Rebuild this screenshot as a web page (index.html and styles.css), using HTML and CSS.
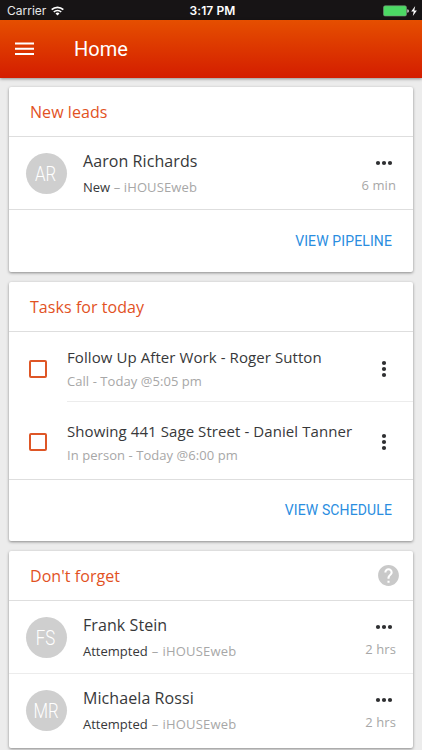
FILE: index.html
```html
<!DOCTYPE html>
<html lang="en">
<head>
<meta charset="utf-8">
<title>Home</title>
<link rel="stylesheet" href="styles.css">
</head>
<body>
<svg class="defs" width="0" height="0" aria-hidden="true">
  <symbol id="dots-h" viewBox="0 0 18 6"><circle cx="3" cy="3" r="2.1"/><circle cx="9" cy="3" r="2.1"/><circle cx="15" cy="3" r="2.1"/></symbol>
  <symbol id="dots-v" viewBox="0 0 6 18"><circle cx="3" cy="3" r="2.1"/><circle cx="3" cy="9" r="2.1"/><circle cx="3" cy="15" r="2.1"/></symbol>
</svg>
<div class="status">
  <div class="carrier"><span>Carrier</span>
    <svg class="wifi" width="13" height="10" viewBox="0 0 13 10" fill="none" stroke="#fff" stroke-width="1.7"><path d="M.7 3.7a8.3 8.3 0 0 1 11.6 0M2.8 6a5.3 5.3 0 0 1 7.4 0"/><path d="M6.5 9.6 4.5 7.5a2.9 2.9 0 0 1 4 0z" fill="#fff" stroke="none"/></svg>
  </div>
  <div class="time">3:17 PM</div>
  <div class="power">
    <svg width="35" height="12" viewBox="0 0 35 12"><rect x=".5" y=".8" width="23" height="10.2" rx="1.6" fill="#4cd964" stroke="#79917b" stroke-width=".6"/><path d="M24.3 4.2q1.6.3 1.6 1.8t-1.6 1.8z" fill="#ddd"/><path d="M32.2 1 28.2 6.6h2.5L29.8 11l4.1-5.6h-2.6z" fill="#fff"/></svg>
  </div>
</div>
<header class="appbar">
  <svg width="19" height="14" viewBox="0 0 19 14" fill="#fff"><path d="M0 .5h19v2.1H0zM0 5.7h19v2.1H0zM0 10.9h19V13H0z"/></svg>
  <h1>Home</h1>
</header>
<main>
  <section class="card">
    <div class="head"><h2>New leads</h2></div>
    <div class="row lead">
      <div class="avatar"><span>AR</span></div>
      <div class="info"><div class="name">Aaron Richards</div><div class="sub"><b>New</b> – iHOUSEweb</div></div>
      <div class="side"><svg class="dh"><use href="#dots-h"/></svg><span>6 min</span></div>
    </div>
    <div class="foot"><a>VIEW PIPELINE</a></div>
  </section>
  <section class="card">
    <div class="head"><h2>Tasks for today</h2></div>
    <div class="tasks">
      <div class="task">
        <i class="box"></i>
        <div class="info"><div class="name">Follow Up After Work - Roger Sutton</div><div class="sub">Call - Today @5:05 pm</div></div>
        <svg class="dv"><use href="#dots-v"/></svg>
      </div>
      <div class="task second">
        <i class="box"></i>
        <div class="info"><div class="name">Showing 441 Sage Street - Daniel Tanner</div><div class="sub">In person - Today @6:00 pm</div></div>
        <svg class="dv"><use href="#dots-v"/></svg>
      </div>
    </div>
    <div class="foot short"><a>VIEW SCHEDULE</a></div>
  </section>
  <section class="card">
    <div class="head"><h2>Don't forget</h2>
      <svg class="help" width="25" height="25" viewBox="0 0 24 24" fill="#c9c9c9"><path d="M12 2C6.48 2 2 6.48 2 12s4.48 10 10 10 10-4.48 10-10S17.52 2 12 2zm1 17h-2v-2h2v2zm2.07-7.75-.9.92C13.45 12.9 13 13.5 13 15h-2v-.5c0-1.1.45-2.1 1.17-2.83l1.24-1.26c.37-.36.59-.86.59-1.41 0-1.1-.9-2-2-2s-2 .9-2 2H8c0-2.21 1.79-4 4-4s4 1.79 4 4c0 .88-.36 1.68-.93 2.25z"/></svg>
    </div>
    <div class="row light">
      <div class="avatar"><span>FS</span></div>
      <div class="info"><div class="name">Frank Stein</div><div class="sub"><b>Attempted</b> – iHOUSEweb</div></div>
      <div class="side"><svg class="dh"><use href="#dots-h"/></svg><span>2 hrs</span></div>
    </div>
    <div class="row last">
      <div class="avatar"><span>MR</span></div>
      <div class="info"><div class="name">Michaela Rossi</div><div class="sub"><b>Attempted</b> – iHOUSEweb</div></div>
      <div class="side"><svg class="dh"><use href="#dots-h"/></svg><span>2 hrs</span></div>
    </div>
  </section>
</main>
</body>
</html>
```
FILE: styles.css
```css
* { box-sizing: border-box; }
body { margin: 0; height: 750px; overflow: hidden; background: #ececec; color: #37383a; font-family: "Open Sans", "Noto Sans", sans-serif; }
.defs { display: block; }
h1, h2 { margin: 0; font-weight: 400; }
.status { display: grid; grid-template-columns: 1fr auto 1fr; align-items: center; height: 20px; padding: 1px 4px 0 7px; background: #171415; color: #fff; font: 12px/20px Inter, sans-serif; }
.carrier { display: flex; align-items: center; gap: 5px; color: #e8e8e8; }
.wifi { margin-top: -1px; }
.time { font-weight: 600; letter-spacing: .1px; }
.power { display: flex; justify-content: flex-end; }
.appbar { position: relative; display: flex; align-items: center; height: 58px; padding-left: 15px; background: linear-gradient(#e54f00, #d41d00); box-shadow: 0 1px 3px rgba(0,0,0,.4); color: #fff; }
.appbar h1 { margin-left: 40px; font: 20px/24px Roboto, sans-serif; }
main { display: flex; flex-direction: column; gap: 10px; padding: 9px 9px 0; }
.card { flex: none; background: #fff; border-radius: 2px; box-shadow: 0 1px 3px rgba(0,0,0,.42); }
.head { display: flex; align-items: center; justify-content: space-between; height: 50px; padding: 0 12px 0 21px; border-bottom: 1px solid #dedede; }
.head h2 { color: #e2521f; font-size: 16px; line-height: 24px; letter-spacing: .06px; }
.row { display: flex; height: 73px; padding: 12px 17px 0; border-bottom: 1px solid #dedede; }
.light { border-color: #ececec; }
.last { height: 74px; border: 0; }
.avatar { width: 41px; height: 41px; margin-top: 4px; padding-right: 1px; border-radius: 50%; background: #cfcfcf; color: #fff; text-align: center; font: 300 20px/42px Roboto, sans-serif; }
.avatar span { display: inline-block; transform: scaleX(.84); }
.info { flex: 1; white-space: nowrap; }
.row .info { margin-left: 16px; }
.name { font-size: 16px; line-height: 24px; letter-spacing: .08px; }
.sub { color: #a7a7a7; font-size: 13px; line-height: 20px; letter-spacing: .06px; }
.row .sub { margin-top: 4px; letter-spacing: .2px; word-spacing: .5px; }
.lead .info .sub { letter-spacing: .12px; word-spacing: 0; }
.sub b { color: #37383a; font-weight: 400; letter-spacing: 0; }
.side { display: flex; flex-direction: column; align-items: flex-end; color: #a7a7a7; font-size: 13px; line-height: 20px; letter-spacing: .1px; }
.dh { width: 18px; height: 6px; margin: 11px 3px 9px 0; fill: #2e2f31; }
.foot { display: flex; justify-content: flex-end; align-items: center; height: 62px; padding-right: 21px; color: #2a8ddf; font: 14px/20px Roboto, sans-serif; letter-spacing: .12px; }
.short { height: 61px; padding-bottom: 1px; }
.tasks { border-bottom: 1px solid #dedede; }
.task { display: flex; height: 70px; padding-left: 20px; }
.second { height: 77px; }
.box { width: 18px; height: 18px; margin-top: 28px; border: 2px solid #de5626; border-radius: 2px; }
.second .box { margin-top: 31px; }
.task .info { margin-left: 20px; padding-top: 13px; border-bottom: 1px solid #ececec; }
.second .info { padding-top: 17px; border: 0; }
.task .name { font-size: 15px; letter-spacing: .08px; }
.task .sub { margin-top: 2px; }
.dv { box-sizing: content-box; width: 6px; height: 18px; padding: 28px 26px 23px 0; border-bottom: 1px solid #ececec; fill: #2e2f31; }
.second .dv { padding: 31px 26px 0 0; border: 0; }
```
